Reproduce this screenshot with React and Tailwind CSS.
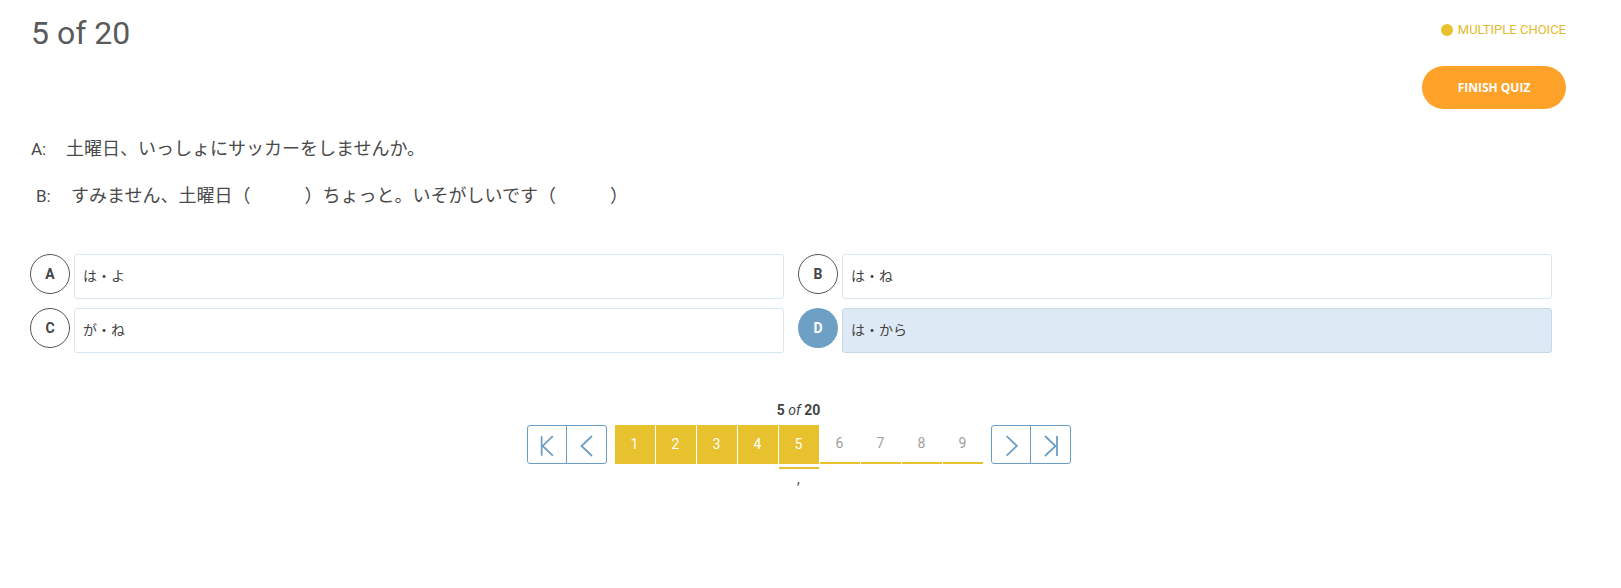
import React, { useState } from "react";

const sans = { fontFamily: "Roboto, 'Noto Sans CJK JP', sans-serif" };

const options = [
  { key: "A", text: "は・よ" },
  { key: "B", text: "は・ね" },
  { key: "C", text: "が・ね" },
  { key: "D", text: "は・から" },
];

const stroke = "#6b9ec6";

const FirstIcon = () => (
  <svg width="39" height="39" viewBox="0 0 39 39" fill="none">
    <path d="M14 11v20" stroke={stroke} strokeWidth="1.8" />
    <path d="M25.5 11L15 21l10.5 10" stroke={stroke} strokeWidth="1.8" />
  </svg>
);

const PrevIcon = () => (
  <svg width="39" height="39" viewBox="0 0 39 39" fill="none">
    <path d="M25 11L14.5 21 25 31" stroke={stroke} strokeWidth="1.8" />
  </svg>
);

const NextIcon = () => (
  <svg width="39" height="39" viewBox="0 0 39 39" fill="none">
    <path d="M15 11l10.5 10L15 31" stroke={stroke} strokeWidth="1.8" />
  </svg>
);

const LastIcon = () => (
  <svg width="39" height="39" viewBox="0 0 39 39" fill="none">
    <path d="M14 11l10.5 10L14 31" stroke={stroke} strokeWidth="1.8" />
    <path d="M26 11v20" stroke={stroke} strokeWidth="1.8" />
  </svg>
);

const App = () => {
  const [selected, setSelected] = useState("D");
  const current = 5;

  return (
    <div className="min-h-screen bg-white pl-[31px] pr-[55px] text-[#4a4a4a]" style={sans}>
      {/* Header */}
      <div className="flex items-start justify-between">
        <h1 className="mt-[15px] text-[32px] leading-[1.171] font-normal text-[#5a5a5a]">5 of 20</h1>
        <div className="flex flex-col items-end">
          <div className="mt-[22px] flex items-center gap-[5px] text-[13px] leading-[16px] text-[#e4ba2c]">
            <span className="w-[12px] h-[12px] rounded-full bg-[#e9c12f]" />
            MULTIPLE CHOICE
          </div>
          <button
            className="mt-[28px] w-[144px] h-[43px] rounded-full bg-[#ffa229] text-white text-[12px] font-bold"
            style={{ fontFamily: "'Open Sans', sans-serif" }}
          >
            FINISH QUIZ
          </button>
        </div>
      </div>

      {/* Question */}
      <div className="text-[18px] leading-[24px] text-[#4a4a4a]">
        <p className="mt-[28px] flex">
          <span className="w-[35px] text-[17px]">A:</span>
          <span>土曜日、いっしょにサッカーをしませんか。</span>
        </p>
        <p className="mt-[23px] flex pl-[5px]">
          <span className="w-[35px] text-[17px]">B:</span>
          <span>すみません、土曜日（　　　）ちょっと。いそがしいです（　　　）</span>
        </p>
      </div>

      {/* Options */}
      <div className="mt-[46px] grid grid-cols-2 gap-y-[9px] -ml-px">
        {options.map((o) => {
          const active = selected === o.key;
          return (
            <div key={o.key} className="flex items-start gap-[4px] pr-[14px] cursor-pointer" onClick={() => setSelected(o.key)}>
              <div
                className={
                  active
                    ? "w-[40px] h-[40px] shrink-0 rounded-full bg-[#6e9fc5] text-white flex items-center justify-center text-[14px] font-bold"
                    : "w-[40px] h-[40px] shrink-0 rounded-full border border-[#555555] text-[#444444] flex items-center justify-center text-[14px] font-bold"
                }
              >
                {o.key}
              </div>
              <div
                className={
                  active
                    ? "flex-1 h-[45px] rounded-[3px] border border-[#c5d9ea] bg-[#dde9f4] flex items-center pl-[8px] text-[14px] text-[#444444]"
                    : "flex-1 h-[45px] rounded-[3px] border border-[#d9e7f1] bg-white flex items-center pl-[8px] text-[14px] text-[#444444]"
                }
              >
                {o.text}
              </div>
            </div>
          );
        })}
      </div>

      {/* Pagination */}
      <div className="mt-[47px] flex flex-col items-center">
        <div className="text-[14px] leading-[20px] font-bold text-[#444444]">
          5 <span className="italic font-normal">of</span> 20
        </div>
        <div className="mt-[5px] flex items-start">
          <div className="flex rounded-[3px] border border-[#6b9ec6] h-[39px]">
            <button className="w-[39px] h-[37px] flex items-center justify-center border-r border-[#6b9ec6]">
              <FirstIcon />
            </button>
            <button className="w-[39px] h-[37px] flex items-center justify-center">
              <PrevIcon />
            </button>
          </div>
          <div className="ml-[8px] flex gap-px">
            {[1, 2, 3, 4, 5, 6, 7, 8, 9].map((n) =>
              n <= current ? (
                <div key={n} className="flex flex-col">
                  <div className="w-[40px] h-[39px] bg-[#e8c12f] text-white text-[14px] flex items-center justify-center">{n}</div>
                  {n === current && <div className="mt-[3px] h-[2px] bg-[#e8c12f]" />}
                </div>
              ) : (
                <div key={n} className="w-[40px] h-[39px] border-b-2 border-[#e8c12f] text-[#a0a0a0] text-[14px] flex items-center justify-center">
                  {n}
                </div>
              )
            )}
          </div>
          <div className="ml-[8px] flex rounded-[3px] border border-[#6b9ec6] h-[39px]">
            <button className="w-[39px] h-[37px] flex items-center justify-center border-r border-[#6b9ec6]">
              <NextIcon />
            </button>
            <button className="w-[39px] h-[37px] flex items-center justify-center">
              <LastIcon />
            </button>
          </div>
        </div>
        <div className="text-[14px] leading-[20px] text-[#444444]">,</div>
      </div>
    </div>
  );
};

export default App;
